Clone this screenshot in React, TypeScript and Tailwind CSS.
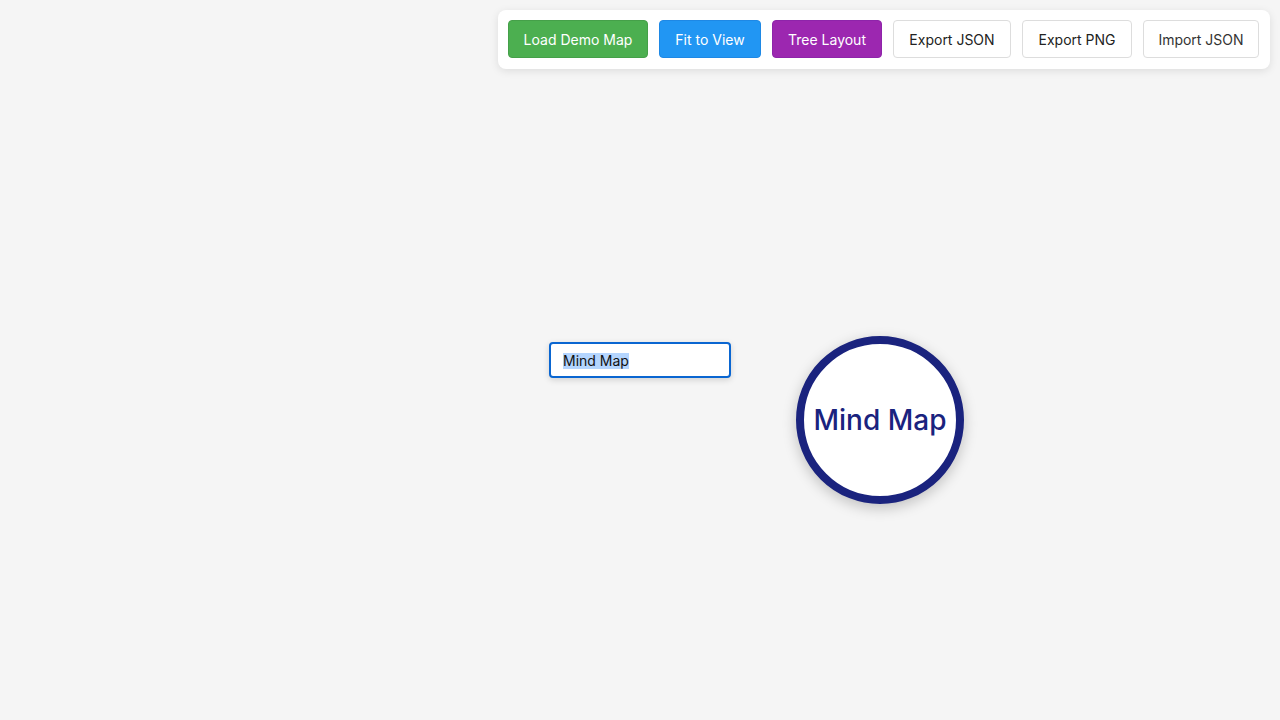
import React from "react";

export default function App() {
  const btn = "h-[38px] rounded-[4px] border text-[14px] leading-none flex items-center justify-center whitespace-nowrap shrink-0 pt-[2px]";
  return (
    <div className="relative w-[1280px] h-[720px] overflow-hidden bg-[#f5f5f5]" style={{ fontFamily: "Inter, 'Noto Sans', sans-serif" }}>
      <div className="absolute top-[10px] right-[10px] bg-white rounded-[8px] shadow-[0_2px_8px_rgba(0,0,0,0.1)] pt-[10px] pb-[11px] pl-[10px] pr-[11px] flex gap-[11px]">
        <button className={`${btn} w-[140px] bg-[#4caf50] border-[#45a049] text-white`}>Load Demo Map</button>
        <button className={`${btn} w-[102px] bg-[#2196f3] border-[#1e88e5] text-white`}>Fit to View</button>
        <button className={`${btn} w-[110px] bg-[#9c27b0] border-[#8e24aa] text-white`}>Tree Layout</button>
        <button className={`${btn} w-[118px] bg-white border-[#dddddd] text-[#222222]`}>Export JSON</button>
        <button className={`${btn} w-[110px] bg-white border-[#dddddd] text-[#222222]`}>Export PNG</button>
        <button className={`${btn} w-[116px] bg-white border-[#dddddd] text-[#333333]`}>Import JSON</button>
      </div>

      <div className="absolute left-[549px] top-[342px] w-[182px] h-[36px] bg-white border-2 border-[#0a66d1] rounded-[4px] shadow-[0_2px_6px_rgba(0,0,0,0.15)] flex items-center pl-[12px] text-[14px] text-[#111111]">
        <span className="bg-[#b4d5fe] leading-[16px] mt-[1px]">Mind Map</span>
      </div>

      <div className="absolute left-[796px] top-[336px] w-[168px] h-[168px] rounded-full bg-white border-[8px] border-[#1a237e] shadow-[0_4px_14px_rgba(0,0,0,0.22)] flex items-center justify-center">
        <span className="text-[28px] font-medium text-[#1a237e] leading-none">Mind Map</span>
      </div>
    </div>
  );
}
